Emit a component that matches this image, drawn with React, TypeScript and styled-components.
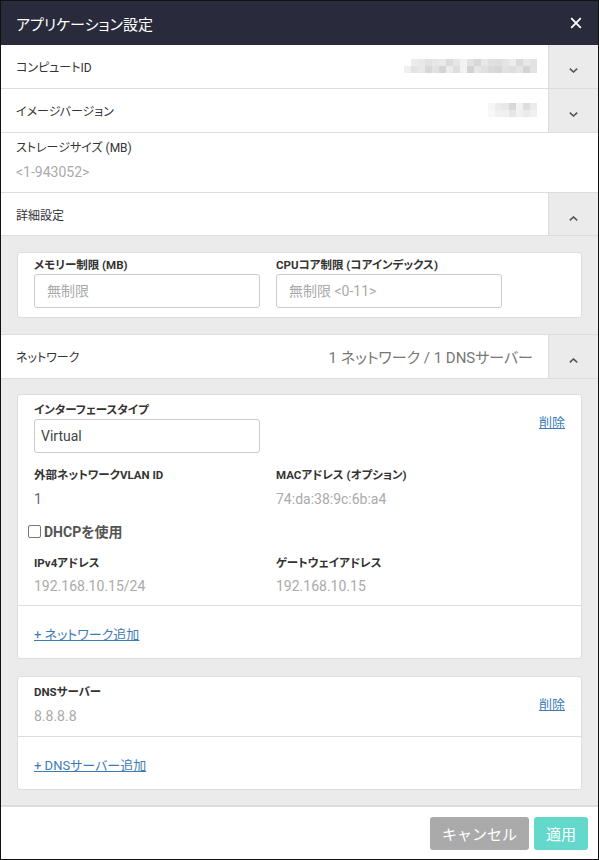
import styled, { createGlobalStyle } from "styled-components";

const GlobalStyle = createGlobalStyle`
  html, body {
    margin: 0;
    padding: 0;
    background: #fff;
  }
  body {
    font-family: Roboto, "Noto Sans CJK JP", "Noto Sans", sans-serif;
    font-feature-settings: "palt";
    color: #333;
  }
  * {
    box-sizing: border-box;
  }
`;

const Dialog = styled.div`
  width: 599px;
  height: 860px;
  border: 1px solid #111;
  display: flex;
  flex-direction: column;
  overflow: hidden;
  background: #fff;
`;

const Header = styled.header`
  height: 44px;
  flex-shrink: 0;
  background: #292b3c;
  display: flex;
  align-items: center;
  justify-content: space-between;
  padding: 0 16px 0 15px;
`;

const Title = styled.h1`
  margin: 0;
  font-size: 15px;
  font-weight: 400;
  color: #fff;
`;

const CloseButton = styled.button`
  border: none;
  background: none;
  padding: 0;
  width: 12px;
  height: 12px;
  display: flex;
  cursor: pointer;
`;

const Row = styled.div<{ $h?: number }>`
  height: ${(p) => p.$h ?? 44}px;
  flex-shrink: 0;
  display: flex;
  border-bottom: 1px solid #ddd;
`;

const RowLabel = styled.div`
  flex: 1;
  display: flex;
  align-items: center;
  padding-left: 15px;
  font-size: 12px;
  color: #333;
`;

const Summary = styled.div`
  display: flex;
  align-items: center;
  margin-right: 15px;
  font-size: 15px;
  color: #777;
`;

const Hidden = styled.div`
  display: flex;
  align-items: center;
  margin-right: 11px;
`;

const Mosaic = styled.div<{ $cols: number }>`
  display: grid;
  grid-template-columns: repeat(${(p) => p.$cols}, 7px);
  grid-auto-rows: 7px;
  margin-top: -2px;
`;

const Tile = styled.span<{ $shade: string }>`
  background: ${(p) => p.$shade};
`;

const Toggle = styled.button`
  width: 50px;
  flex-shrink: 0;
  border: none;
  border-left: 1px solid #ddd;
  background: #ebebeb;
  display: flex;
  align-items: center;
  justify-content: center;
  padding: 8px 0 0;
  cursor: pointer;
`;

const StaticBlock = styled.div`
  flex-shrink: 0;
  padding: 7px 15px 10px;
  border-bottom: 1px solid #ddd;
`;

const BlockLabel = styled.div`
  height: 16px;
  font-size: 12px;
  line-height: 16px;
  color: #333;
`;

const Value = styled.div<{ $dark?: boolean; $gap?: number }>`
  margin-top: ${(p) => p.$gap ?? 7}px;
  height: 20px;
  font-size: 14px;
  line-height: 20px;
  color: ${(p) => (p.$dark ? "#666" : "#aaa")};
`;

const Panel = styled.div<{ $fill?: boolean; $top?: number }>`
  background: #ebebeb;
  padding: ${(p) => p.$top ?? 16}px 16px 16px;
  border-bottom: 1px solid #ddd;
  display: flex;
  flex-direction: column;
  gap: 17px;
  flex: ${(p) => (p.$fill ? "1 1 0" : "0 0 auto")};
  min-height: 0;
`;

const Card = styled.div`
  background: #fff;
  border: 1px solid #ddd;
  border-radius: 3px;
  flex-shrink: 0;
`;

const CardBody = styled.div<{ $top: number; $bottom: number }>`
  padding: ${(p) => p.$top}px 16px ${(p) => p.$bottom}px;
`;

const CardFooter = styled.div`
  border-top: 1px solid #ddd;
  padding: 18px 16px 16px;
  height: 53px;
`;

const FieldGrid = styled.div<{ $mt?: number }>`
  display: grid;
  grid-template-columns: 226px 226px 1fr;
  column-gap: 16px;
  margin-top: ${(p) => p.$mt ?? 0}px;
`;

const Field = styled.div`
  display: flex;
  flex-direction: column;
`;

const FieldLabel = styled.label`
  height: 14px;
  font-size: 11.5px;
  line-height: 14px;
  font-weight: 700;
  color: #333;
  white-space: nowrap;
`;

const Input = styled.input<{ $tight?: boolean }>`
  margin-top: 2px;
  height: 34px;
  width: 100%;
  border: 1px solid #ccc;
  border-radius: 3px;
  padding: 0 ${(p) => (p.$tight ? 6 : 12)}px;
  font-family: inherit;
  font-size: 14px;
  color: #444;
  background: #fff;
  outline: none;
  &::placeholder {
    color: #aaa;
  }
`;

const Link = styled.a<{ $side?: boolean }>`
  display: inline-block;
  height: 18px;
  font-size: 13px;
  line-height: 18px;
  color: #3c7bb6;
  text-decoration: underline;
  cursor: pointer;
  justify-self: ${(p) => (p.$side ? "end" : "start")};
  align-self: start;
  margin-top: ${(p) => (p.$side ? 11 : 0)}px;
`;

const CheckRow = styled.label`
  display: flex;
  align-items: center;
  gap: 3px;
  margin: 12px 0 0 -6px;
  height: 20px;
  font-size: 14px;
  font-weight: 700;
  color: #555;
`;

const Checkbox = styled.input`
  appearance: none;
  margin: 0;
  width: 13px;
  height: 13px;
  border: 1px solid #767676;
  border-radius: 2px;
  background: #fff;
`;

const Footer = styled.footer`
  flex-shrink: 0;
  height: 53px;
  display: flex;
  justify-content: flex-end;
  gap: 5px;
  padding: 10px 10px 9px;
  border-top: 1px solid #ddd;
`;

const Button = styled.button<{ $primary?: boolean }>`
  height: 33px;
  padding: 0 12px;
  border: none;
  border-radius: 3px;
  font-family: inherit;
  font-size: 15px;
  color: #fff;
  background: ${(p) => (p.$primary ? "#63d8cb" : "#aaaaaa")};
  cursor: pointer;
`;

const Chevron = ({ up }: { up?: boolean }) => (
  <svg width="9" height="5" viewBox="0 0 9 5">
    <polyline
      points={up ? "0.8,4.4 4.5,1 8.2,4.4" : "0.8,0.6 4.5,4 8.2,0.6"}
      fill="none"
      stroke="#555"
      strokeWidth="1.6"
    />
  </svg>
);

const idShades = [
  ["#fff", "#ececec", "#e8e8e8", "#e2e2e2", "#e6e6e6", "#eaeaea", "#dcdcdc", "#e6e6e6", "#f2f2f2", "#e2e2e2", "#d8d8d8", "#e8e8e8", "#e0e0e0", "#dedede", "#e4e4e4", "#ececec", "#dadada", "#e8e8e8", "#e2e2e2"],
  ["#f0f0f0", "#e4e4e4", "#e8e8e8", "#d8d8d8", "#e2e2e2", "#d4d4d4", "#ececec", "#dedede", "#f2f2f2", "#d2d2d2", "#e6e6e6", "#e0e0e0", "#dadada", "#d6d6d6", "#e2e2e2", "#dedede", "#e4e4e4", "#d4d4d4", "#e2e2e2"],
];

const versionShades = [
  ["#f6f6f6", "#ececec", "#e8e8e8", "#d8d8d8", "#f2f2f2", "#dedede", "#ececec"],
  ["#f8f8f8", "#f0f0f0", "#f0f0f0", "#e6e6e6", "#f0f0f0", "#eaeaea", "#f0f0f0"],
];

const Blurred = ({ shades }: { shades: string[][] }) => (
  <Hidden>
    <Mosaic $cols={shades[0].length}>
      {shades.flat().map((s, i) => (
        <Tile key={i} $shade={s} />
      ))}
    </Mosaic>
  </Hidden>
);

export default function App() {
  return (
    <>
      <GlobalStyle />
      <Dialog>
        <Header>
          <Title>アプリケーション設定</Title>
          <CloseButton aria-label="close">
            <svg width="12" height="12" viewBox="0 0 12 12">
              <path d="M1.2 1.2 L10.8 10.8 M10.8 1.2 L1.2 10.8" stroke="#fff" strokeWidth="1.8" />
            </svg>
          </CloseButton>
        </Header>

        <Row>
          <RowLabel>コンピュートID</RowLabel>
          <Blurred shades={idShades} />
          <Toggle>
            <Chevron />
          </Toggle>
        </Row>

        <Row>
          <RowLabel>イメージバージョン</RowLabel>
          <Blurred shades={versionShades} />
          <Toggle>
            <Chevron />
          </Toggle>
        </Row>

        <StaticBlock>
          <BlockLabel>ストレージサイズ (MB)</BlockLabel>
          <Value $gap={6}>&lt;1-943052&gt;</Value>
        </StaticBlock>

        <Row $h={43}>
          <RowLabel>詳細設定</RowLabel>
          <Toggle>
            <Chevron up />
          </Toggle>
        </Row>

        <Panel>
          <Card>
            <CardBody $top={5} $bottom={9}>
              <FieldGrid>
                <Field>
                  <FieldLabel>メモリー制限 (MB)</FieldLabel>
                  <Input placeholder="無制限" />
                </Field>
                <Field>
                  <FieldLabel>CPUコア制限 (コアインデックス)</FieldLabel>
                  <Input placeholder="無制限 <0-11>" />
                </Field>
              </FieldGrid>
            </CardBody>
          </Card>
        </Panel>

        <Row>
          <RowLabel>ネットワーク</RowLabel>
          <Summary>1 ネットワーク / 1 DNSサーバー</Summary>
          <Toggle>
            <Chevron up />
          </Toggle>
        </Row>

        <Panel $fill $top={15}>
          <Card>
            <CardBody $top={8} $bottom={9}>
              <FieldGrid>
                <Field>
                  <FieldLabel>インターフェースタイプ</FieldLabel>
                  <Input $tight defaultValue="Virtual" />
                </Field>
                <span />
                <Link $side>削除</Link>
              </FieldGrid>
              <FieldGrid $mt={15}>
                <Field>
                  <FieldLabel>外部ネットワークVLAN ID</FieldLabel>
                  <Value $dark>1</Value>
                </Field>
                <Field>
                  <FieldLabel>MACアドレス (オプション)</FieldLabel>
                  <Value>74:da:38:9c:6b:a4</Value>
                </Field>
              </FieldGrid>
              <CheckRow>
                <Checkbox type="checkbox" />
                DHCPを使用
              </CheckRow>
              <FieldGrid $mt={15}>
                <Field>
                  <FieldLabel>IPv4アドレス</FieldLabel>
                  <Value $gap={6}>192.168.10.15/24</Value>
                </Field>
                <Field>
                  <FieldLabel>ゲートウェイアドレス</FieldLabel>
                  <Value $gap={6}>192.168.10.15</Value>
                </Field>
              </FieldGrid>
            </CardBody>
            <CardFooter>
              <Link>+ ネットワーク追加</Link>
            </CardFooter>
          </Card>

          <Card>
            <CardBody $top={8} $bottom={10}>
              <FieldGrid>
                <Field>
                  <FieldLabel>DNSサーバー</FieldLabel>
                  <Value>8.8.8.8</Value>
                </Field>
                <span />
                <Link $side>削除</Link>
              </FieldGrid>
            </CardBody>
            <CardFooter>
              <Link>+ DNSサーバー追加</Link>
            </CardFooter>
          </Card>
        </Panel>

        <Footer>
          <Button>キャンセル</Button>
          <Button $primary>適用</Button>
        </Footer>
      </Dialog>
    </>
  );
}
